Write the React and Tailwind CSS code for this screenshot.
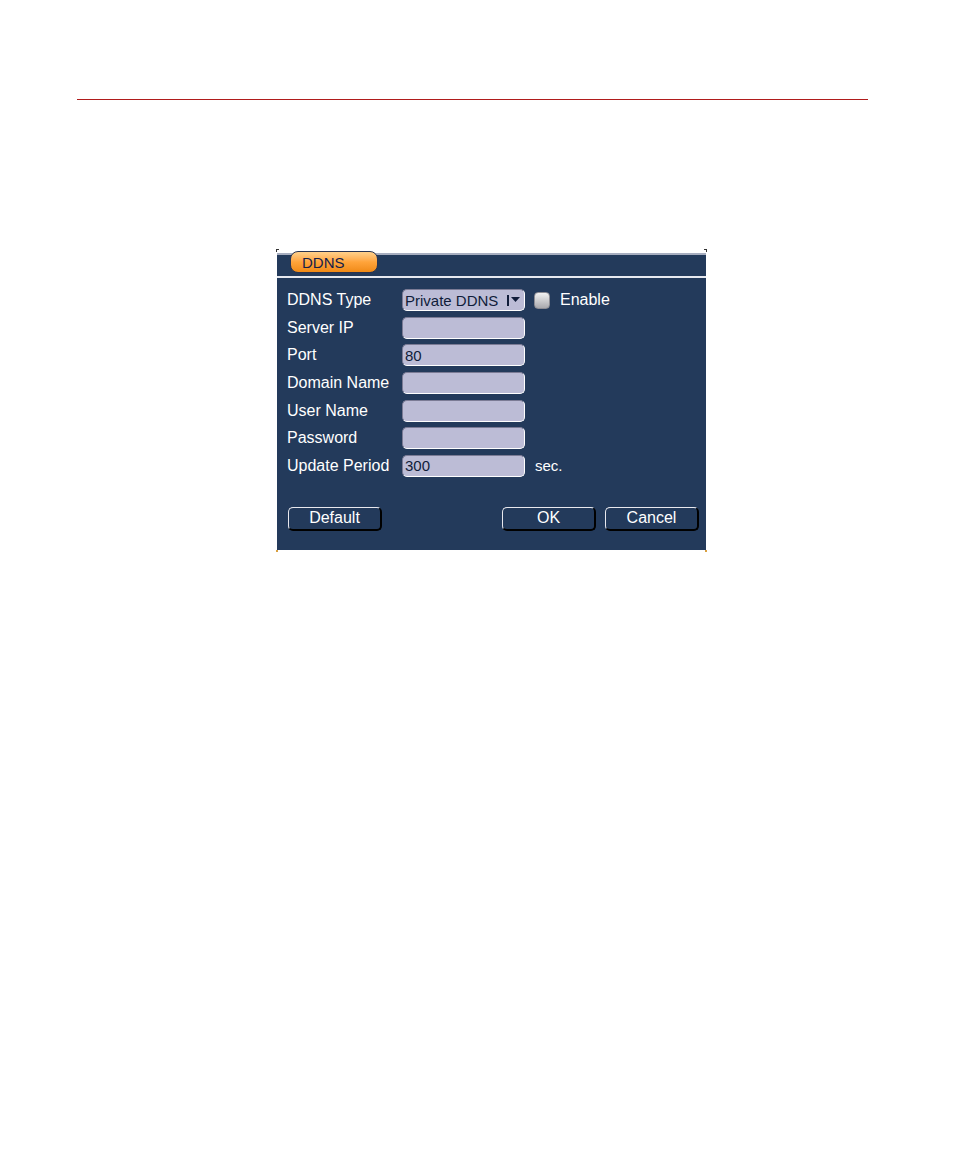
import React from 'react';

const rows = [
  { label: 'DDNS Type', kind: 'select', value: 'Private DDNS' },
  { label: 'Server IP', value: '' },
  { label: 'Port', value: '80' },
  { label: 'Domain Name', value: '' },
  { label: 'User Name', value: '' },
  { label: 'Password', value: '' },
  { label: 'Update Period', value: '300', suffix: 'sec.' },
];

// Lavender text box with the sunken look of the DVR menu
function Field({ value, children }) {
  return (
    <div className="w-[123px] h-[22px] rounded-[5px] bg-[#bcbcd6] border border-t-[#7b7b95] border-l-[#7b7b95] border-r-white border-b-white flex items-center pl-[2px] text-[15px] text-[#101c3a] leading-none overflow-hidden">
      {value}
      {children}
    </div>
  );
}

function DvrButton({ label }) {
  return (
    <button className="w-[94px] h-[24px] rounded-[5px] bg-[#233a5b] border border-t-[#e8e8ee] border-l-[#e8e8ee] border-r-black border-b-black border-r-2 border-b-2 text-white text-[16px] leading-none flex items-center justify-center">
      {label}
    </button>
  );
}

export default function App() {
  return (
    <div
      className="w-[955px] h-[1157px] bg-white overflow-hidden"
      style={{ fontFamily: '"Liberation Sans", Arial, sans-serif' }}
    >
      <div className="pt-[99px] pl-[77px]">
        <div className="w-[791px] h-px bg-[#b01c1c]" />
      </div>

      <div className="relative ml-[277px] mt-[153px] w-[429px] h-[297px] bg-[#233a5b] flex flex-col">
        {/* little frame ticks at the corners */}
        <span className="absolute -left-[1px] -top-[4px] w-[3px] h-[3px] border-l border-t border-[#333]" />
        <span className="absolute -right-[1px] -top-[4px] w-[3px] h-[3px] border-r border-t border-[#333]" />
        <span className="absolute -left-[1px] -bottom-[2px] w-[2px] h-[2px] bg-[#d9a040]" />
        <span className="absolute -right-[1px] -bottom-[2px] w-[2px] h-[2px] bg-[#d9a040]" />

        {/* header band with the orange tab */}
        <div className="relative h-[23px] border-t-2 border-[#a7aec0]">
          <div className="absolute left-[13px] -top-[4px] w-[88px] h-[22px] rounded-[8px] border border-[#2a3450] bg-gradient-to-b from-[#ffd08a] via-[#ffa43a] to-[#f08a14] flex items-center pl-[11px] text-[15px] text-[#14204a] leading-none">
            DDNS
          </div>
        </div>
        <div className="h-[2px] bg-[#e6e9f0]" />

        <div className="flex flex-col gap-[5.67px] pt-[11px] pl-[10px]">
          {rows.map((row) => (
            <div key={row.label} className="flex items-center h-[22px]">
              <div className="w-[115px] text-white text-[16px] leading-none">{row.label}</div>
              {row.kind === 'select' ? (
                <Field value={row.value}>
                  <span className="ml-auto mr-[4px] flex items-center gap-[1px]">
                    <span className="w-[2px] h-[11px] bg-[#101c3a]" />
                    <svg width="9" height="6" viewBox="0 0 9 6" className="ml-[1px]">
                      <path d="M0 0 H9 L4.5 5 Z" fill="#101c3a" />
                    </svg>
                  </span>
                </Field>
              ) : (
                <Field value={row.value} />
              )}
              {row.kind === 'select' && (
                <div className="flex items-center ml-[9px]">
                  <span className="w-[16px] h-[17px] rounded-[4px] bg-gradient-to-b from-[#f2f2f2] to-[#a9a9ae] border border-[#8c8c94]" />
                  <span className="ml-[10px] text-white text-[16px] leading-none">Enable</span>
                </div>
              )}
              {row.suffix && (
                <span className="ml-[10px] text-white text-[15px] leading-none">{row.suffix}</span>
              )}
            </div>
          ))}
        </div>

        <div className="flex items-center mt-[30px] pl-[11px] pr-[7px]">
          <DvrButton label="Default" />
          <div className="ml-auto flex gap-[9px]">
            <DvrButton label="OK" />
            <DvrButton label="Cancel" />
          </div>
        </div>
      </div>
    </div>
  );
}
